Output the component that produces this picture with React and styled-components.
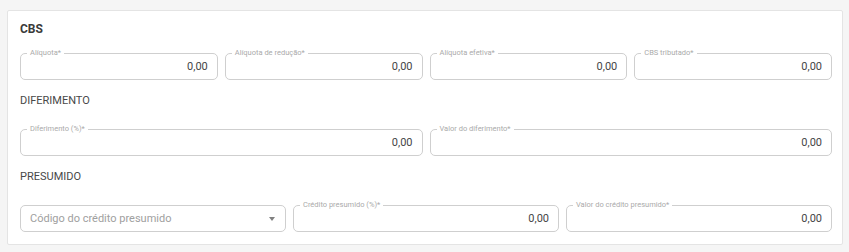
import React from "react";
import styled, { createGlobalStyle } from "styled-components";

const Global = createGlobalStyle`
  html, body { margin: 0; padding: 0; background: #f5f5f5; }
  body { font-family: Roboto, "Liberation Sans", Arial, sans-serif; }
`;

const Page = styled.div`
  padding: 10px 6px 6px 7px;
`;

const Card = styled.section`
  background: #fff;
  border: 1px solid #e4e4e4;
  border-radius: 2px;
  padding: 11px 10px 12px 12px;
  display: flex;
  flex-direction: column;
`;

const Title = styled.h2`
  margin: 0 0 17px;
  font-size: 12px;
  line-height: 14px;
  font-weight: 700;
  color: #3a3a3a;
`;

const SubTitle = styled.h3`
  margin: 14px 0 22px;
  font-size: 11px;
  line-height: 13px;
  font-weight: 400;
  color: #484848;
  text-transform: uppercase;
`;

const Row = styled.div`
  display: grid;
  grid-template-columns: repeat(${(p) => p.$cols}, 1fr);
  gap: 7px;
`;

const Field = styled.div`
  position: relative;
  height: 27px;
  box-sizing: border-box;
  border: 1px solid #cfcfcf;
  border-radius: 5px;
  display: flex;
  align-items: center;
  justify-content: ${(p) => (p.$select ? "space-between" : "flex-end")};
  padding: ${(p) => (p.$select ? "0 10px 0 9px" : "0 9px")};
`;

const Label = styled.span`
  position: absolute;
  top: -6px;
  left: 6px;
  padding: 0 3px;
  background: #fff;
  font-size: 7.5px;
  line-height: 10px;
  color: #aaa;
  white-space: nowrap;
`;

const Value = styled.span`
  font-size: 11px;
  color: #454545;
`;

const Placeholder = styled.span`
  font-size: 11px;
  color: #a0a0a0;
`;

const Caret = styled.span`
  width: 0;
  height: 0;
  border-left: 3.5px solid transparent;
  border-right: 3.5px solid transparent;
  border-top: 4px solid #808080;
`;

const NumField = ({ label, value = "0,00" }) => (
  <Field>
    <Label>{label}</Label>
    <Value>{value}</Value>
  </Field>
);

export default function App() {
  return (
    <>
      <Global />
      <Page>
        <Card>
          <Title>CBS</Title>
          <Row $cols={4}>
            <NumField label="Alíquota*" />
            <NumField label="Alíquota de redução*" />
            <NumField label="Alíquota efetiva*" />
            <NumField label="CBS tributado*" />
          </Row>
          <SubTitle>Diferimento</SubTitle>
          <Row $cols={2}>
            <NumField label="Diferimento (%)*" />
            <NumField label="Valor do diferimento*" />
          </Row>
          <SubTitle>Presumido</SubTitle>
          <Row $cols={3}>
            <Field $select>
              <Placeholder>Código do crédito presumido</Placeholder>
              <Caret />
            </Field>
            <NumField label="Crédito presumido (%)*" />
            <NumField label="Valor do crédito presumido*" />
          </Row>
        </Card>
      </Page>
    </>
  );
}
